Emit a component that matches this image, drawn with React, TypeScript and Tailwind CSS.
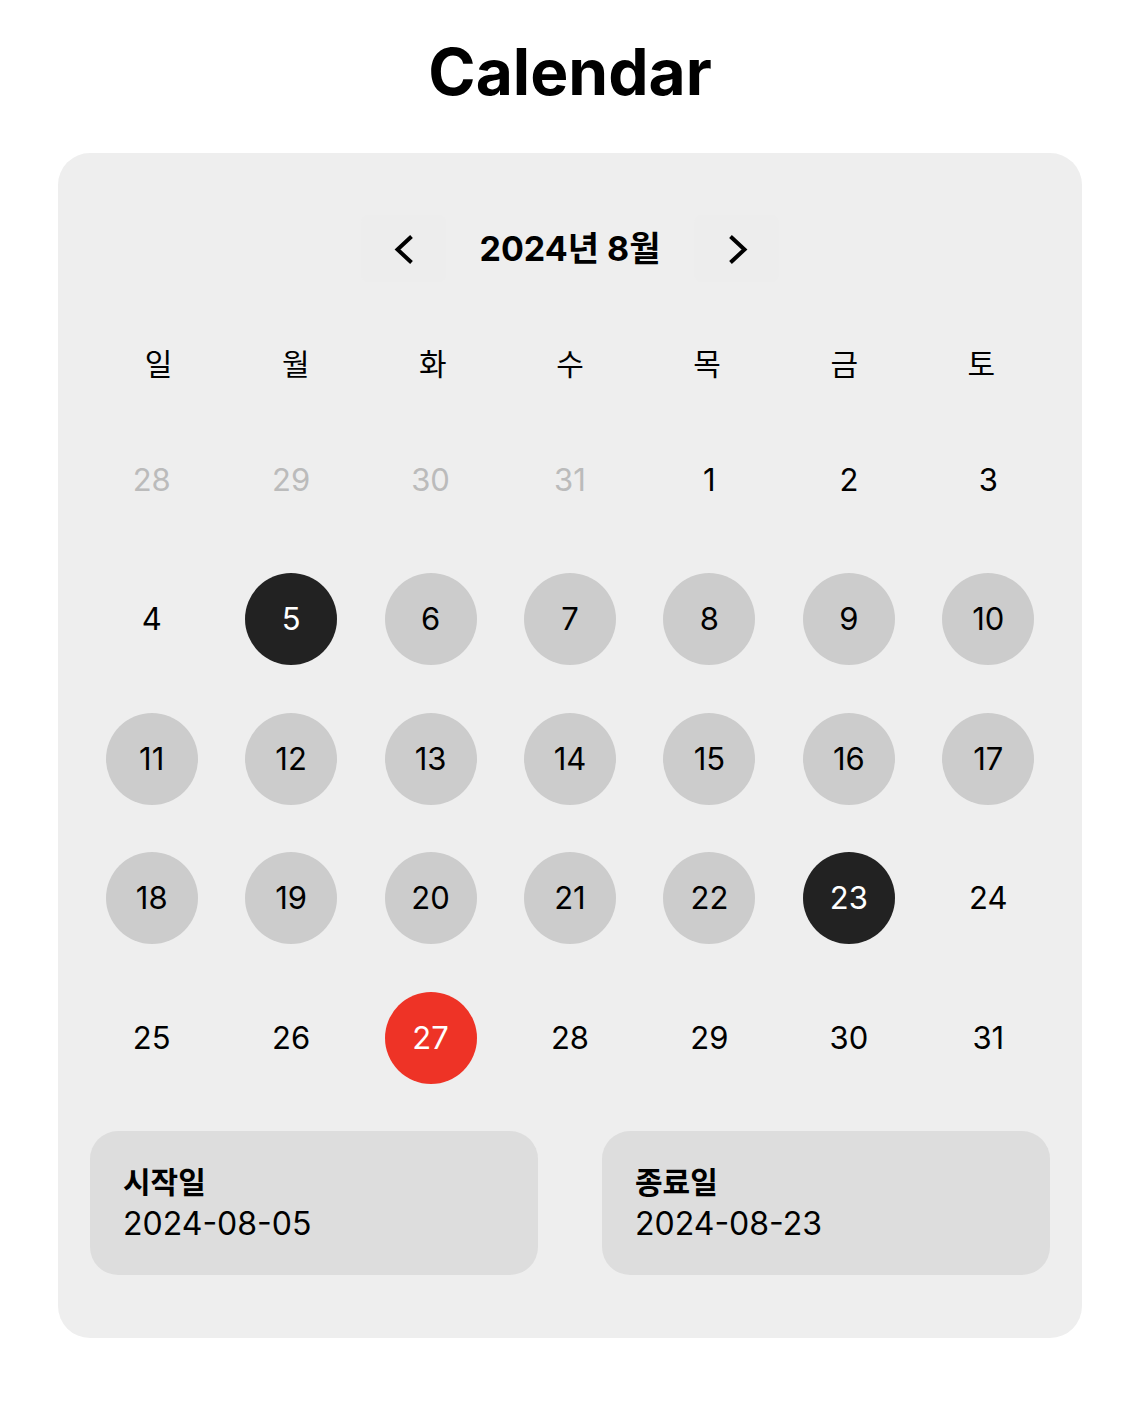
import React from "react";

const F = { fontFamily: "Inter, 'Noto Sans CJK KR', sans-serif" };

type Cell = { d: number; kind: "prev" | "plain" | "range" | "edge" | "today" };

const weeks: Cell[][] = [
  [
    { d: 28, kind: "prev" },
    { d: 29, kind: "prev" },
    { d: 30, kind: "prev" },
    { d: 31, kind: "prev" },
    { d: 1, kind: "plain" },
    { d: 2, kind: "plain" },
    { d: 3, kind: "plain" },
  ],
  [
    { d: 4, kind: "plain" },
    { d: 5, kind: "edge" },
    { d: 6, kind: "range" },
    { d: 7, kind: "range" },
    { d: 8, kind: "range" },
    { d: 9, kind: "range" },
    { d: 10, kind: "range" },
  ],
  [11, 12, 13, 14, 15, 16, 17].map((d) => ({ d, kind: "range" as const })),
  [
    { d: 18, kind: "range" },
    { d: 19, kind: "range" },
    { d: 20, kind: "range" },
    { d: 21, kind: "range" },
    { d: 22, kind: "range" },
    { d: 23, kind: "edge" },
    { d: 24, kind: "plain" },
  ],
  [
    { d: 25, kind: "plain" },
    { d: 26, kind: "plain" },
    { d: 27, kind: "today" },
    { d: 28, kind: "plain" },
    { d: 29, kind: "plain" },
    { d: 30, kind: "plain" },
    { d: 31, kind: "plain" },
  ],
];

function DayCell({ c }: { c: Cell }) {
  const cls =
    c.kind === "prev"
      ? "text-[#bbbbbb]"
      : c.kind === "range"
      ? "bg-[#cccccc] text-black"
      : c.kind === "edge"
      ? "bg-[#222222] text-white"
      : c.kind === "today"
      ? "bg-[#ee3326] text-white"
      : "text-black";
  return (
    <div className="flex h-[139.5px] items-center justify-center">
      <div
        className={`flex h-[92px] w-[92px] items-center justify-center rounded-full text-[31px] ${cls}`}
      >
        {c.d}
      </div>
    </div>
  );
}

export default function App() {
  const days = ["일", "월", "화", "수", "목", "금", "토"];
  return (
    <div className="min-h-[1428px] bg-white" style={F}>
      <h1 className="pt-[33px] text-center text-[64px] font-bold leading-[78px] text-black">
        Calendar
      </h1>
      <div className="mx-[58px] mt-[42px] rounded-[32px] bg-[#eeeeee] px-6 pb-[63px] pt-[62px]">
        <div className="flex items-center justify-center">
          <button className="flex h-[67px] w-[85px] items-center justify-center rounded-lg bg-[#ededed]">
            <svg width="26" height="34" viewBox="0 0 26 34" fill="none">
              <path d="M20.5 4.5 L6.5 17.5 L20.5 30.5" stroke="black" strokeWidth="4" strokeLinejoin="miter" />
            </svg>
          </button>
          <div className="w-[248px] text-center text-[34px] font-bold text-black">
            2024년 8월
          </div>
          <button className="flex h-[67px] w-[85px] items-center justify-center rounded-lg bg-[#ededed]">
            <svg width="26" height="34" viewBox="0 0 26 34" fill="none">
              <path d="M6.5 4.5 L20.5 17.5 L6.5 30.5" stroke="black" strokeWidth="4" strokeLinejoin="miter" />
            </svg>
          </button>
        </div>
        <div className="mx-2 mt-[37px] grid grid-cols-7">
          {days.map((d) => (
            <div
              key={d}
              className="flex h-[91px] items-center justify-center text-[30px] text-black"
            >
              {d}
            </div>
          ))}
        </div>
        <div className="grid grid-cols-7">
          {weeks.flat().map((c, i) => (
            <DayCell key={i} c={c} />
          ))}
        </div>
        <div className="mx-2 mt-[23px] grid grid-cols-2 gap-16">
          <div className="h-[144px] rounded-[28px] bg-[#dddddd] px-[33px] pt-[31px]">
            <div className="text-[30px] font-bold leading-[40px] text-black">시작일</div>
            <div className="text-[32px] leading-[44px] text-black">2024-08-05</div>
          </div>
          <div className="h-[144px] rounded-[28px] bg-[#dddddd] px-[33px] pt-[31px]">
            <div className="text-[30px] font-bold leading-[40px] text-black">종료일</div>
            <div className="text-[32px] leading-[44px] text-black">2024-08-23</div>
          </div>
        </div>
      </div>
    </div>
  );
}
